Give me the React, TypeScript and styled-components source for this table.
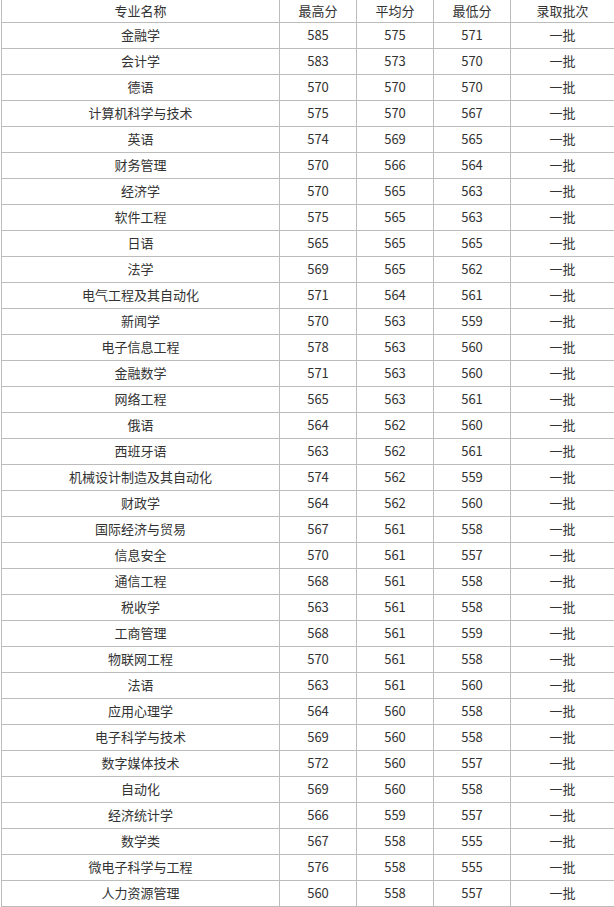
import React from "react";
import styled, { createGlobalStyle } from "styled-components";

const Global = createGlobalStyle`
  html, body { margin: 0; padding: 0; background: #fff; overflow: hidden; }
  body { font-family: "Noto Sans CJK SC", "Noto Sans", sans-serif; }
`;

const Wrap = styled.div`
  padding-left: 1px;
  width: 640px;
`;

const Table = styled.div`
  display: grid;
  grid-template-columns: 278px 77px 77px 77px 104px;
  border-left: 1px solid #bcbcbc;
  width: max-content;
`;

const Cell = styled.div<{ $head?: boolean }>`
  box-sizing: border-box;
  height: ${(p) => (p.$head ? 23 : 26)}px;
  padding-bottom: 2px;
  border-right: 1px solid #bcbcbc;
  border-bottom: 1px solid #bcbcbc;
  display: flex;
  align-items: center;
  justify-content: center;
  font-size: 13px;
  color: #333;
  line-height: 1;
  white-space: nowrap;
`;

const head = ["专业名称", "最高分", "平均分", "最低分", "录取批次"];

const rows: [string, number, number, number][] = [
  ["金融学", 585, 575, 571],
  ["会计学", 583, 573, 570],
  ["德语", 570, 570, 570],
  ["计算机科学与技术", 575, 570, 567],
  ["英语", 574, 569, 565],
  ["财务管理", 570, 566, 564],
  ["经济学", 570, 565, 563],
  ["软件工程", 575, 565, 563],
  ["日语", 565, 565, 565],
  ["法学", 569, 565, 562],
  ["电气工程及其自动化", 571, 564, 561],
  ["新闻学", 570, 563, 559],
  ["电子信息工程", 578, 563, 560],
  ["金融数学", 571, 563, 560],
  ["网络工程", 565, 563, 561],
  ["俄语", 564, 562, 560],
  ["西班牙语", 563, 562, 561],
  ["机械设计制造及其自动化", 574, 562, 559],
  ["财政学", 564, 562, 560],
  ["国际经济与贸易", 567, 561, 558],
  ["信息安全", 570, 561, 557],
  ["通信工程", 568, 561, 558],
  ["税收学", 563, 561, 558],
  ["工商管理", 568, 561, 559],
  ["物联网工程", 570, 561, 558],
  ["法语", 563, 561, 560],
  ["应用心理学", 564, 560, 558],
  ["电子科学与技术", 569, 560, 558],
  ["数字媒体技术", 572, 560, 557],
  ["自动化", 569, 560, 558],
  ["经济统计学", 566, 559, 557],
  ["数学类", 567, 558, 555],
  ["微电子科学与工程", 576, 558, 555],
  ["人力资源管理", 560, 558, 557],
];

export default function App() {
  return (
    <>
      <Global />
      <Wrap>
        <Table>
          {head.map((h) => (
            <Cell key={h} $head>
              {h}
            </Cell>
          ))}
          {rows.map((r) => (
            <React.Fragment key={r[0]}>
              <Cell>{r[0]}</Cell>
              <Cell>{r[1]}</Cell>
              <Cell>{r[2]}</Cell>
              <Cell>{r[3]}</Cell>
              <Cell>一批</Cell>
            </React.Fragment>
          ))}
        </Table>
      </Wrap>
    </>
  );
}
